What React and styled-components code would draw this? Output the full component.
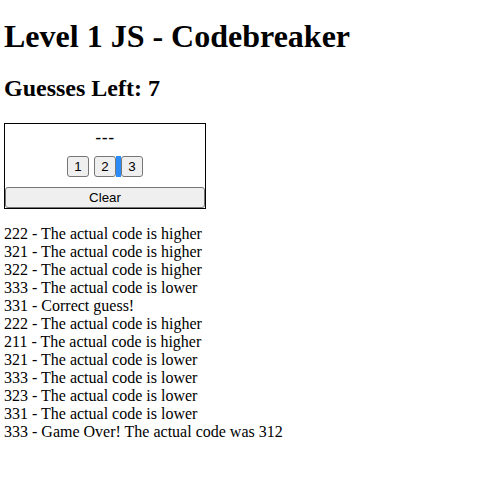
import React from 'react'
import { styled, createGlobalStyle } from 'styled-components'

const GlobalStyle = createGlobalStyle`
  body {
    margin: 0;
    font-family: "Liberation Serif", "Times New Roman", serif;
    font-size: 16px;
    color: #000;
    background: #fff;
  }
`

const Page = styled.div`
  padding: 0 4px;
`

const Title = styled.h1`
  font-size: 32px;
  font-weight: bold;
  margin: 18px 0 20px;
`

const Counter = styled.h2`
  font-size: 24px;
  font-weight: bold;
  margin: 0 0 21px;
`

const Board = styled.div`
  width: 200px;
  border: 1px solid #000;
  font-family: "Liberation Sans", Arial, sans-serif;
`

const Display = styled.div`
  padding-top: 4px;
  height: 18px;
  text-align: center;
  font-size: 18px;
  line-height: 21px;
  letter-spacing: 0.5px;
`

const Keys = styled.div`
  display: flex;
  justify-content: center;
  margin: 10px 0;
`

const Button = styled.button`
  box-sizing: border-box;
  height: 21px;
  background: #efefef;
  border: 1px solid #767676;
  border-radius: 3px;
  padding: 0 6.5px;
  font-family: "Liberation Sans", Arial, sans-serif;
  font-size: 13.333px;
  line-height: 19px;
  color: #000;
  width: ${p => (p.$wide ? '100%' : 'auto')};
  display: block;
`

const Separator = styled.span`
  width: 4.5px;
  background: ${p => (p.$caret ? '#2b8cf7' : 'transparent')};
`

const Log = styled.div`
  margin-top: 16px;
  line-height: 18px;
`

const history = [
  '222 - The actual code is higher',
  '321 - The actual code is higher',
  '322 - The actual code is higher',
  '333 - The actual code is lower',
  '331 - Correct guess!',
  '222 - The actual code is higher',
  '211 - The actual code is higher',
  '321 - The actual code is lower',
  '333 - The actual code is lower',
  '323 - The actual code is lower',
  '331 - The actual code is lower',
  '333 - Game Over! The actual code was 312',
]

export default function App() {
  const caretAt = 2
  return (
    <>
      <GlobalStyle />
      <Page>
        <Title>Level 1 JS - Codebreaker</Title>
        <Counter>Guesses Left: 7</Counter>
        <Board>
          <Display>---</Display>
          <Keys>
            {[1, 2, 3].map((n, i) => (
              <React.Fragment key={n}>
                {i > 0 && <Separator $caret={i === caretAt} />}
                <Button>{n}</Button>
              </React.Fragment>
            ))}
          </Keys>
          <Button $wide>Clear</Button>
        </Board>
        <Log>
          {history.map((line, i) => (
            <div key={i}>{line}</div>
          ))}
        </Log>
      </Page>
    </>
  )
}
